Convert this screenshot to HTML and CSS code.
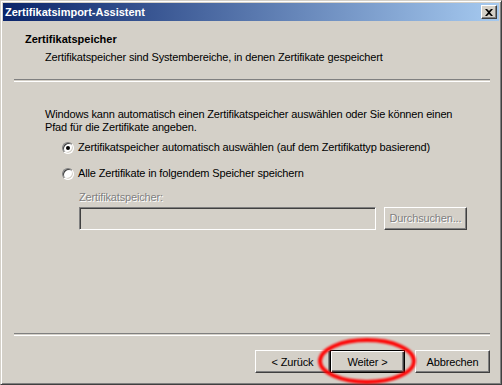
FILE: index.html
```html
<!DOCTYPE html>
<html lang="de">
<head>
<meta charset="utf-8">
<title>Zertifikatimport-Assistent</title>
<link rel="stylesheet" href="styles.css">
</head>
<body>
<div class="window">
  <div class="titlebar">
    <span class="title">Zertifikatsimport-Assistent</span>
    <span class="close"><svg width="8" height="7" viewBox="0 0 8 7"><path d="M0 0h2l2 2 2-2h2L5 3.5 8 7H6L4 5 2 7H0l3-3.5z" fill="#000"/></svg></span>
  </div>
  <div class="header">
    <div class="h-title">Zertifikatspeicher</div>
    <div class="h-sub">Zertifikatspeicher sind Systembereiche, in denen Zertifikate gespeichert</div>
  </div>
  <div class="sep"></div>
  <div class="body">
    <p class="intro">Windows kann automatisch einen Zertifikatspeicher auswählen oder Sie können einen<br>Pfad für die Zertifikate angeben.</p>
    <div class="opt"><span class="radio checked"></span><span>Zertifikatspeicher automatisch auswählen (auf dem Zertifikattyp basierend)</span></div>
    <div class="opt"><span class="radio"></span><span>Alle Zertifikate in folgendem Speicher speichern</span></div>
    <div class="store">
      <div class="disabled-label">Zertifikatspeicher:</div>
      <div class="store-row">
        <div class="field"></div>
        <div class="btn disabled-btn"><span class="disabled-label">Durchsuchen...</span></div>
      </div>
    </div>
  </div>
  <div class="sep"></div>
  <div class="buttons">
    <div class="btn b-back">&lt; Zurück</div>
    <div class="btn b-next">Weiter &gt;</div>
    <div class="btn b-cancel">Abbrechen</div>
  </div>
  <svg class="mark" width="110" height="60" viewBox="0 0 110 60">
    <defs><filter id="bl" x="-10%" y="-10%" width="120%" height="120%"><feGaussianBlur stdDeviation="0.8"/></filter></defs>
    <ellipse cx="56" cy="30" rx="47" ry="21" fill="none" stroke="#ff0000" stroke-width="3.8" filter="url(#bl)"/>
  </svg>
</div>
</body>
</html>
```
FILE: styles.css
```css
html, body { margin: 0; padding: 0; }
body { background: #d4d0c8; font-family: Tahoma, "Liberation Sans", Arial, sans-serif; font-size: 11px; color: #000; }
.window {
  position: relative;
  width: 502px; height: 385px; box-sizing: border-box;
  border-style: solid; border-width: 1px;
  border-color: #d4d0c8 #404040 #404040 #d4d0c8;
  box-shadow: inset 1px 1px 0 #fff, inset -1px -1px 0 #808080;
  padding: 2px;
  background: #d4d0c8;
  display: flex; flex-direction: column;
  letter-spacing: -0.15px;
}
.titlebar {
  height: 18px; flex: none;
  background: linear-gradient(to right, #0a246a, #a6caf0);
  display: flex; align-items: center; justify-content: space-between;
  padding: 0 2px 0 2px;
}
.title { color: #fff; font-weight: bold; font-size: 11px; line-height: 13px; letter-spacing: 0; }
.close {
  width: 16px; height: 14px; box-sizing: border-box;
  background: #d4d0c8;
  border-style: solid; border-width: 1px;
  border-color: #fff #404040 #404040 #fff;
  box-shadow: inset -1px -1px 0 #808080;
  display: flex; align-items: center; justify-content: center;
}
.close svg { display: block; margin-left: -1px; }
.header { height: 58px; flex: none; box-sizing: border-box; padding: 12px 0 0 22px; line-height: 13px; }
.h-title { font-weight: bold; letter-spacing: 0; }
.h-sub { margin: 5px 0 0 20px; }
.sep { flex: none; height: 1px; margin: 0 9px 0 11px; border-top: 1px solid #808080; border-bottom: 1px solid #fff; }
.body { flex: 1; padding: 26px 0 0 42px; line-height: 13px; }
.intro { margin: 0 0 7px 0; }
.opt { display: flex; align-items: center; gap: 4px; margin-left: 17px; height: 13px; margin-bottom: 13px; }
.radio {
  width: 12px; height: 12px; box-sizing: border-box; border-radius: 50%;
  background: #fff; flex: none;
  border: 1px solid; border-color: #808080 #fff #fff #808080;
  box-shadow: inset 1px 1px 0 #404040, inset -1px -1px 0 #d4d0c8;
  display: flex; align-items: center; justify-content: center;
}
.radio.checked::after { content: ""; width: 4px; height: 4px; border-radius: 50%; background: #000; }
.store { margin-left: 34px; margin-top: -2px; }
.disabled-label { color: #808080; text-shadow: 1px 1px 0 #fff; }
.store-row { display: flex; gap: 8px; margin-top: 3px; margin-right: 30px; }
.field {
  width: 297px; height: 23px; box-sizing: border-box;
  border: 1px solid; border-color: #808080 #fff #fff #808080;
  box-shadow: inset 1px 1px 0 #404040, inset -1px -1px 0 #d4d0c8;
}
.btn {
  box-sizing: border-box; height: 23px;
  border: 1px solid; border-color: #fff #404040 #404040 #fff;
  box-shadow: inset -1px -1px 0 #808080;
  display: flex; align-items: center; justify-content: center;
  background: #d4d0c8;
}
.disabled-btn { width: 83px; }
.buttons { flex: none; height: 46px; display: flex; justify-content: flex-end; padding: 14px 9px 0 0; box-sizing: border-box; }
.b-back { width: 75px; }
.b-next { width: 75px; border-color: #000; box-shadow: inset 1px 1px 0 #fff, inset -1px -1px 0 #404040, inset -2px -2px 0 #808080; }
.b-cancel { width: 75px; margin-left: 10px; }
.mark { position: absolute; left: 310px; top: 330px; }
```
